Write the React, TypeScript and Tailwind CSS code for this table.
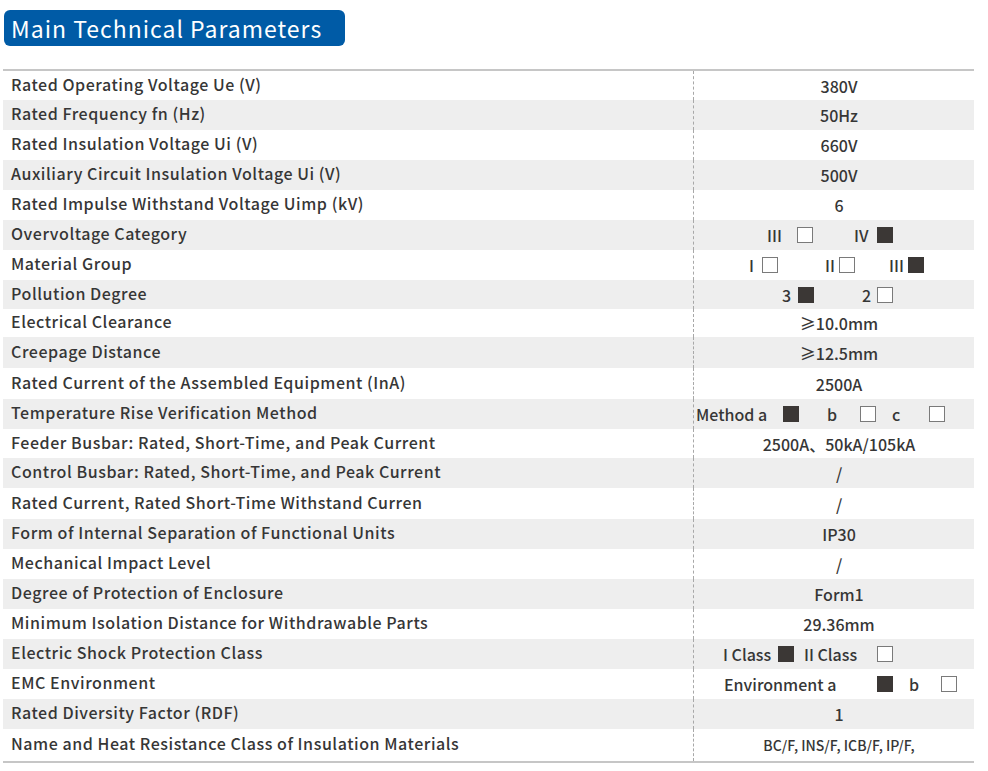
import React from "react";

type Item = { t: string; ml: number; w: number; filled: boolean };

const Box = ({ filled }: { filled: boolean }) =>
  filled ? (
    <span className="inline-block w-[16px] h-[16px] bg-[#3b3735] shrink-0" />
  ) : (
    <span className="inline-block w-[16px] h-[16px] bg-white border border-[#7a7a7a] shrink-0" />
  );

const Checks = ({ items }: { items: Item[] }) => (
  <div className="flex items-center h-full">
    {items.map((it, i) => (
      <React.Fragment key={i}>
        <span className="shrink-0 whitespace-nowrap" style={{ marginLeft: it.ml, width: it.w }}>
          {it.t}
        </span>
        <Box filled={it.filled} />
      </React.Fragment>
    ))}
  </div>
);

type Row = { label: string; value?: string; checks?: Item[]; small?: boolean };

const rows: Row[] = [
  { label: "Rated Operating Voltage Ue (V)", value: "380V" },
  { label: "Rated Frequency fn (Hz)", value: "50Hz" },
  { label: "Rated Insulation Voltage Ui (V)", value: "660V" },
  { label: "Auxiliary Circuit Insulation Voltage Ui (V)", value: "500V" },
  { label: "Rated Impulse Withstand Voltage Uimp (kV)", value: "6" },
  {
    label: "Overvoltage Category",
    checks: [
      { t: "III", ml: 73, w: 30, filled: false },
      { t: "IV", ml: 41, w: 23, filled: true },
    ],
  },
  {
    label: "Material Group",
    checks: [
      { t: "I", ml: 55, w: 13, filled: false },
      { t: "II", ml: 47, w: 14, filled: false },
      { t: "III", ml: 34, w: 19, filled: true },
    ],
  },
  {
    label: "Pollution Degree",
    checks: [
      { t: "3", ml: 88, w: 16, filled: true },
      { t: "2", ml: 48, w: 15, filled: false },
    ],
  },
  { label: "Electrical Clearance", value: "≥10.0mm" },
  { label: "Creepage Distance", value: "≥12.5mm" },
  { label: "Rated Current of the Assembled Equipment (InA)", value: "2500A" },
  {
    label: "Temperature Rise Verification Method",
    checks: [
      { t: "Method a", ml: 2, w: 87, filled: true },
      { t: "b", ml: 28, w: 33, filled: false },
      { t: "c", ml: 16, w: 37, filled: false },
    ],
  },
  { label: "Feeder Busbar: Rated, Short-Time, and Peak Current", value: "2500A、50kA/105kA" },
  { label: "Control Busbar: Rated, Short-Time, and Peak Current", value: "/" },
  { label: "Rated Current, Rated Short-Time Withstand Curren", value: "/" },
  { label: "Form of Internal Separation of Functional Units", value: "IP30" },
  { label: "Mechanical Impact Level", value: "/" },
  { label: "Degree of Protection of Enclosure", value: "Form1" },
  { label: "Minimum Isolation Distance for Withdrawable Parts", value: "29.36mm" },
  {
    label: "Electric Shock Protection Class",
    checks: [
      { t: "I Class", ml: 29, w: 55, filled: true },
      { t: "II Class", ml: 10, w: 73, filled: false },
    ],
  },
  {
    label: "EMC Environment",
    checks: [
      { t: "Environment a", ml: 30, w: 153, filled: true },
      { t: "b", ml: 16, w: 32, filled: false },
    ],
  },
  { label: "Rated Diversity Factor (RDF)", value: "1" },
  { label: "Name and Heat Resistance Class of Insulation Materials", value: "BC/F, INS/F, ICB/F, IP/F,", small: true },
];

const heights = [29, 30, 30, 30, 30, 30, 30, 29, 28, 31, 31, 30, 29, 30, 31, 30, 30, 30, 30, 30, 30, 30, 32];

export default function App() {
  return (
    <div
      className="w-[988px] h-[771px] bg-white overflow-hidden text-[#363636]"
      style={{ fontFamily: '"Noto Sans CJK SC", "Noto Sans", sans-serif' }}
    >
      <div className="pt-[10px] pl-[4px]">
        <div className="w-[341px] h-[36px] bg-[#005ba6] rounded-[6px] flex items-center pl-[7px] text-white text-[23px] leading-none tracking-[1px]">
          Main Technical Parameters
        </div>
      </div>
      <div className="mt-[23px] ml-[3px] w-[971px] border-t-2 border-b-2 border-[#c6c6c6]">
        {rows.map((r, i) => (
          <div
            key={i}
            className={`flex text-[16px] leading-none font-medium ${i % 2 === 1 ? "bg-[#eeeeee]" : "bg-white"}`}
            style={{ height: heights[i] }}
          >
            <div className="w-[690px] shrink-0 flex items-center pl-[8px] pb-[4px] whitespace-nowrap tracking-[0.55px]">
              {r.label}
            </div>
            <div className="flex-1 border-l border-dashed border-[#a8a8a8] mr-[2px]">
              {r.checks ? (
                <Checks items={r.checks} />
              ) : (
                <div
                  className={`h-full flex items-center justify-center pl-[12px] whitespace-nowrap ${
                    r.small ? "text-[14px]" : ""
                  }`}
                >
                  {r.value}
                </div>
              )}
            </div>
          </div>
        ))}
      </div>
    </div>
  );
}
